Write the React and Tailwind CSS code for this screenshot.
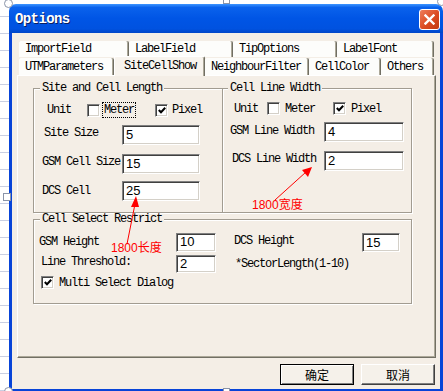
import React from 'react';

const txt = "font-['Liberation_Mono',monospace] text-[12px] leading-[12px] tracking-[-1.2px] text-black whitespace-nowrap";

function Check({ on }) {
  return (
    <span className="w-[13px] h-[13px] bg-white border border-t-[#808080] border-l-[#808080] border-b-white border-r-white shadow-[inset_1px_1px_0_#404040,inset_-1px_-1px_0_#D4D0C8] flex items-center justify-center shrink-0">
      {on && (
        <svg width="8" height="7" viewBox="0 0 8 7">
          <polyline points="0.8,3 3,5.3 7.2,0.8" fill="none" stroke="#000" strokeWidth="2" />
        </svg>
      )}
    </span>
  );
}

function Field({ value, w = 'w-[78px]', h = 'h-[20px]' }) {
  return (
    <div className={`${w} ${h} shrink-0 bg-white border border-t-[#808080] border-l-[#808080] border-b-white border-r-white shadow-[inset_1px_1px_0_#404040,inset_-1px_-1px_0_#D4D0C8] flex items-center pl-[3px] font-['Liberation_Sans',sans-serif] text-[13px] text-black`}>
      {value}
    </div>
  );
}

function Tab({ label, w, active }) {
  if (active) {
    return (
      <div className={`${w} h-[20px] -mt-[2px] relative z-10 bg-[#F8F4EE] border-l border-t border-l-white border-t-white border-r border-r-[#716F64] shadow-[inset_-1px_0_0_#ACA899] rounded-t-[2px] flex items-center pl-[9px] pb-[2px] ${txt}`}>
        {label}
      </div>
    );
  }
  return (
    <div className={`${w} h-full bg-[#FDFDFB] border-r border-r-[#716F64] shadow-[inset_-1px_0_0_#ACA899] rounded-t-[2px] flex items-center pl-[6px] ${txt}`}>
      {label}
    </div>
  );
}

function Group({ title, className, legendClass = 'ml-[6px]', children }) {
  return (
    <fieldset className={`border border-[#A29C91] shadow-[inset_1px_1px_0_#fff,1px_1px_0_#fff] ${className}`}>
      <legend className={`${legendClass} px-[2px] bg-[#F4EEE6] ${txt}`}>{title}</legend>
      {children}
    </fieldset>
  );
}

function Button({ label, main }) {
  return (
    <div
      className={`w-[74px] h-[21px] flex items-center justify-center bg-[#F5F1EA] font-['Noto_Sans_CJK_SC',sans-serif] text-[12px] text-black ${
        main
          ? 'border border-black shadow-[inset_1px_1px_0_#fff,inset_-1px_-1px_0_#808080]'
          : 'border border-t-white border-l-white border-b-[#404040] border-r-[#404040] shadow-[inset_-1px_-1px_0_#808080]'
      }`}
    >
      {label}
    </div>
  );
}

export default function App() {
  return (
    <div className="relative w-[443px] h-[391px] overflow-hidden bg-white pt-[4px] pl-[9px]">
      {/* sheet grid behind the window */}
      <div className="absolute left-0 top-0 w-[9px] h-full bg-[repeating-linear-gradient(to_bottom,transparent_0px,transparent_16px,#C9CFE2_16px,#C9CFE2_17px)]" />

      {/* window */}
      <div className="relative flex flex-col w-[434px] h-[388px]">
        {/* title bar */}
        <div className="h-[29px] shrink-0 rounded-t-[7px] bg-[linear-gradient(to_bottom,#3D95FF_0%,#0A62EC_12%,#0055E5_50%,#0052E0_85%,#0046C8_100%)] flex items-center justify-between pl-[6px]">
          <span className="mt-[1px] font-['Liberation_Mono',monospace] font-bold text-[14px] tracking-[-0.6px] text-white [text-shadow:1px_1px_0_#0A1E60]">Options</span>
          <div className="mr-[3px] mt-[1px] w-[21px] h-[21px] rounded-[3px] border border-white bg-[linear-gradient(135deg,#EE7D5C_0%,#DB4B22_55%,#C23A12_100%)] flex items-center justify-center">
            <svg width="11" height="11" viewBox="0 0 11 11">
              <path d="M1.5 1.5 L9.5 9.5 M9.5 1.5 L1.5 9.5" stroke="#fff" strokeWidth="2.4" strokeLinecap="square" />
            </svg>
          </div>
        </div>

        {/* client */}
        <div className="flex-1 border-l-[3px] border-r-[3px] border-b-[3px] border-l-[#0844D8] border-r-[#0844D8] border-b-[#0844D8] bg-[#F4EEE6] pl-[5px] pr-[4px] pt-[8px] flex flex-col">
          {/* tabs */}
          <div className="flex h-[16px] ml-[2px]">
            <Tab label="ImportField" w="w-[110px]" />
            <Tab label="LabelField" w="w-[104px]" />
            <Tab label="TipOptions" w="w-[104px]" />
            <Tab label="LabelFont" w="w-[97px]" />
          </div>
          <div className="flex h-[17px] ml-[2px] mt-[1px] items-start">
            <Tab label="UTMParameters" w="w-[95px]" />
            <Tab label="SiteCellShow" w="w-[91px]" active />
            <Tab label="NeighbourFilter" w="w-[104px]" />
            <Tab label="CellColor" w="w-[72px]" />
            <Tab label="Others" w="w-[53px]" />
          </div>

          {/* panel */}
          <div className="w-[419px] h-[283px] shrink-0 border border-t-white border-l-white border-r-[#716F64] border-b-[#716F64] shadow-[inset_-1px_-1px_0_#ACA899] pl-[15px] pt-[6px]">
            <div className="flex">
              <Group title="Site and Cell Length" className="w-[190px] h-[131px]">
                <div className="flex items-center mt-[8px] pl-[13px]">
                  <span className={txt}>Unit</span>
                  <span className="ml-[16px]"><Check /></span>
                  <span className={`ml-[2px] px-[1px] py-[1px] border border-dotted border-black ${txt}`}>Meter</span>
                  <span className="ml-[19px]"><Check on /></span>
                  <span className={`ml-[4px] ${txt}`}>Pixel</span>
                </div>
                <div className="flex items-center mt-[7px] pl-[8px]">
                  <span className={`w-[80px] pl-[2px] -mt-[5px] ${txt}`}>Site Size</span>
                  <Field value="5" />
                </div>
                <div className="flex items-center mt-[9px] pl-[8px]">
                  <span className={`w-[80px] -mt-[5px] ${txt}`}>GSM Cell Size</span>
                  <Field value="15" />
                </div>
                <div className="flex items-center mt-[7px] pl-[8px]">
                  <span className={`w-[80px] -mt-[1px] ${txt}`}>DCS Cell</span>
                  <Field value="25" />
                </div>
              </Group>
              <Group title="Cell Line Width" className="w-[189px] h-[131px] border-l-0" legendClass="ml-[5px]">
                <div className="flex items-center mt-[8px] pl-[11px]">
                  <span className={txt}>Unit</span>
                  <span className="ml-[9px]"><Check /></span>
                  <span className={`ml-[5px] ${txt}`}>Meter</span>
                  <span className="ml-[18px]"><Check on /></span>
                  <span className={`ml-[5px] ${txt}`}>Pixel</span>
                </div>
                <div className="flex items-center mt-[7px] pl-[7px]">
                  <span className={`w-[94px] -mt-[2px] ${txt}`}>GSM Line Width</span>
                  <Field value="4" w="w-[80px]" />
                </div>
                <div className="flex items-center mt-[9px] pl-[7px]">
                  <span className={`w-[94px] pl-[2px] -mt-[4px] ${txt}`}>DCS Line Width</span>
                  <Field value="2" w="w-[80px]" />
                </div>
              </Group>
            </div>

            <Group title="Cell Select Restrict" className="w-[379px] h-[91px]">
              <div className="flex mt-[7px]">
                <div className="w-[200px] flex items-center pl-[5px]">
                  <span className={`w-[137px] ${txt}`}>GSM Height</span>
                  <Field value="10" w="w-[40px]" h="h-[19px]" />
                </div>
                <div className="flex items-center mt-[1px]">
                  <span className={`w-[128px] -mt-[4px] ${txt}`}>DCS Height</span>
                  <Field value="15" w="w-[38px]" h="h-[19px]" />
                </div>
              </div>
              <div className="flex mt-[3px]">
                <div className="w-[200px] flex items-center pl-[7px]">
                  <span className={`w-[135px] -mt-[5px] ${txt}`}>Line Threshold:</span>
                  <Field value="2" w="w-[40px]" h="h-[18px]" />
                </div>
                <div className="flex items-center pl-[1px]">
                  <span className={txt}>*SectorLength(1-10)</span>
                </div>
              </div>
              <div className="flex items-center mt-[3px] pl-[7px]">
                <Check on />
                <span className={`ml-[5px] ${txt}`}>Multi Select Dialog</span>
              </div>
            </Group>
          </div>

          {/* buttons */}
          <div className="flex justify-end gap-[7px] mt-[6px] w-[419px] pr-[1px]">
            <Button label="确定" main />
            <Button label="取消" />
          </div>
        </div>
      </div>

      {/* red notes */}
      <svg className="absolute left-0 top-0 pointer-events-none" width="443" height="391">
        <line x1="127" y1="244" x2="135" y2="204" stroke="#F00" strokeWidth="1" />
        <polygon points="136,196 131,207 139,207" fill="#F00" />
        <line x1="275" y1="200" x2="306" y2="172" stroke="#F00" strokeWidth="1" />
        <polygon points="312,167 302,170 308,177" fill="#F00" />
      </svg>
      <span className="absolute left-[111px] top-[241px] font-['Liberation_Sans','Noto_Sans_CJK_SC',sans-serif] text-[12px] leading-[14px] text-[#F00]">1800长度</span>
      <span className="absolute left-[252px] top-[198px] font-['Liberation_Sans','Noto_Sans_CJK_SC',sans-serif] text-[12px] leading-[14px] text-[#F00]">1800宽度</span>

      {/* selection handles */}
      <span className="absolute left-[4px] -top-[1px] w-[9px] h-[9px] rounded-full bg-white border border-[#8A94A8]" />
      <span className="absolute left-[223px] -top-[3px] w-[7px] h-[7px] bg-white border border-[#8A94A8]" />
      <span className="absolute left-[437px] -top-[3px] w-[9px] h-[9px] rounded-full bg-white border border-[#8A94A8]" />
      <span className="absolute left-[3px] top-[193px] w-[8px] h-[8px] bg-white border border-[#8A94A8]" />
      <span className="absolute left-[4px] top-[387px] w-[9px] h-[9px] rounded-full bg-white border border-[#8A94A8]" />
      <span className="absolute left-[223px] top-[388px] w-[7px] h-[7px] bg-white border border-[#8A94A8]" />
    </div>
  );
}
